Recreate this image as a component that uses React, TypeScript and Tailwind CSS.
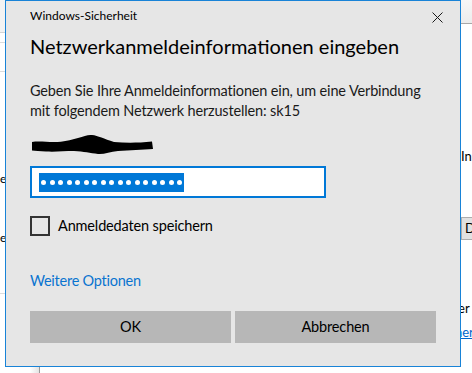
import React from "react";

const font = "font-['Lato',sans-serif]";

function Scribble() {
  return (
    <svg width="126" height="22" viewBox="0 0 126 22" className="block">
      <path
        d="M2 8 C8 7 16 8 24 8 C34 8 40 6 48 4 C54 2 58 0.5 62 1 C68 1.5 74 5 84 8 C96 9 108 9 122 7.5 L123 15 C112 16 100 16 88 17 C80 18 74 20.5 68 20 C60 19 54 17.5 44 17 C34 17 26 18 16 17.5 C10 17 5 17 2 16.5 Z"
        fill="#000"
      />
    </svg>
  );
}

function CloseIcon() {
  return (
    <svg width="11" height="11" viewBox="0 0 11 11" className="block">
      <path d="M0.5 0.5 L10.5 10.5 M10.5 0.5 L0.5 10.5" stroke="#1a1a1a" strokeWidth="1" />
    </svg>
  );
}

export default function App() {
  const dots = Array.from({ length: 17 });

  return (
    <div className={`relative w-[472px] h-[373px] bg-white overflow-hidden ${font}`}>
      {/* background window, left edge */}
      <div className="absolute left-0 top-0 w-[6px] h-[33px] bg-[#f3f3f3] border-b border-[#d4d4d4]" />
      <div className="absolute left-0 top-[42px] w-[6px] h-px bg-[#dcdcdc]" />
      <div className="absolute left-0 top-[71px] w-[6px] h-px bg-[#dcdcdc]" />
      <div className="absolute left-0 top-[293px] w-[6px] h-px bg-[#dcdcdc]" />
      <span className="absolute left-0 top-[171px] text-[12px] leading-[16px] text-black">ev</span>
      <span className="absolute left-0 top-[230px] text-[12px] leading-[16px] text-black">ev</span>

      {/* background window, right edge */}
      <div className="absolute left-[461px] top-0 w-[11px] h-[24px] bg-gradient-to-b from-[#f7f7f7] to-[#ececec] border-b border-[#a8a8a8]" />
      <span className="absolute left-[461px] top-[148px] text-[13px] leading-[16px] text-black">In</span>
      <div className="absolute left-[461px] top-[217px] w-[20px] h-[23px] bg-[#e1e1e1] border border-[#adadad] text-[13px] leading-[21px] pl-[3px] text-black">D</div>
      <span className="absolute left-[455px] top-[300px] text-[13px] leading-[16px] text-black">ler</span>
      <span className="absolute left-[455px] top-[324px] text-[13px] leading-[16px] text-[#0066cc] underline">ner</span>

      {/* background window, bottom */}
      <div className="absolute left-[30px] top-[367px] w-[10px] h-[6px] bg-gradient-to-r from-[#ffffff] to-[#e4e4e4] border-r border-[#9a9a9a]" />

      {/* dialog */}
      <div className="absolute left-[5px] top-0 w-[456px] h-[367px] bg-[#e6e6e6] border border-[#1883d7] flex flex-col px-[24px] text-[#000]">
        <div className="flex justify-between h-[31px]">
          <div className="mt-[7px] text-[12px] leading-[16px]">Windows-Sicherheit</div>
          <div className="mt-[11px] mr-[-7px]">
            <CloseIcon />
          </div>
        </div>

        <h1 className="text-[20px] leading-[28px] font-normal whitespace-nowrap">
          Netzwerkanmeldeinformationen eingeben
        </h1>

        <p className="mt-[21px] text-[14.5px] leading-[20px] tracking-[-0.15px] text-[#1a1a1a] whitespace-nowrap">
          Geben Sie Ihre Anmeldeinformationen ein, um eine Verbindung
          <br />
          mit folgendem Netzwerk herzustellen: sk15
        </p>

        <div className="mt-[13px] h-[22px]">
          <Scribble />
        </div>

        <div className="mt-[10px] w-[296px] h-[32px] bg-white border-2 border-[#0078d7] flex items-start pl-[7px] pt-[5px]">
          <div className="w-[145px] h-[19px] bg-[#0078d7] flex items-center px-[2px] gap-[3.5px]">
            {dots.map((_, i) => (
              <span key={i} className="w-[5px] h-[5px] rounded-full bg-white shrink-0" />
            ))}
          </div>
        </div>

        <label className="mt-[18px] flex items-center gap-[8px] h-[20px]">
          <span className="w-[20px] h-[20px] border-2 border-[#333333] bg-transparent shrink-0" />
          <span className="text-[14.5px] leading-[20px] tracking-[-0.15px]">Anmeldedaten speichern</span>
        </label>

        <div className="mt-[35px] h-[20px] text-[14.5px] leading-[20px] tracking-[-0.25px] text-[#0a74d0]">
          Weitere Optionen
        </div>

        <div className="mt-[20px] grid grid-cols-2 gap-[4px]">
          <button className="h-[32px] bg-[#b7b7b7] text-[14.5px] leading-[20px] tracking-[-0.15px] text-black">
            OK
          </button>
          <button className="h-[32px] bg-[#b7b7b7] text-[14.5px] leading-[20px] tracking-[-0.15px] text-black">
            Abbrechen
          </button>
        </div>
      </div>
    </div>
  );
}
